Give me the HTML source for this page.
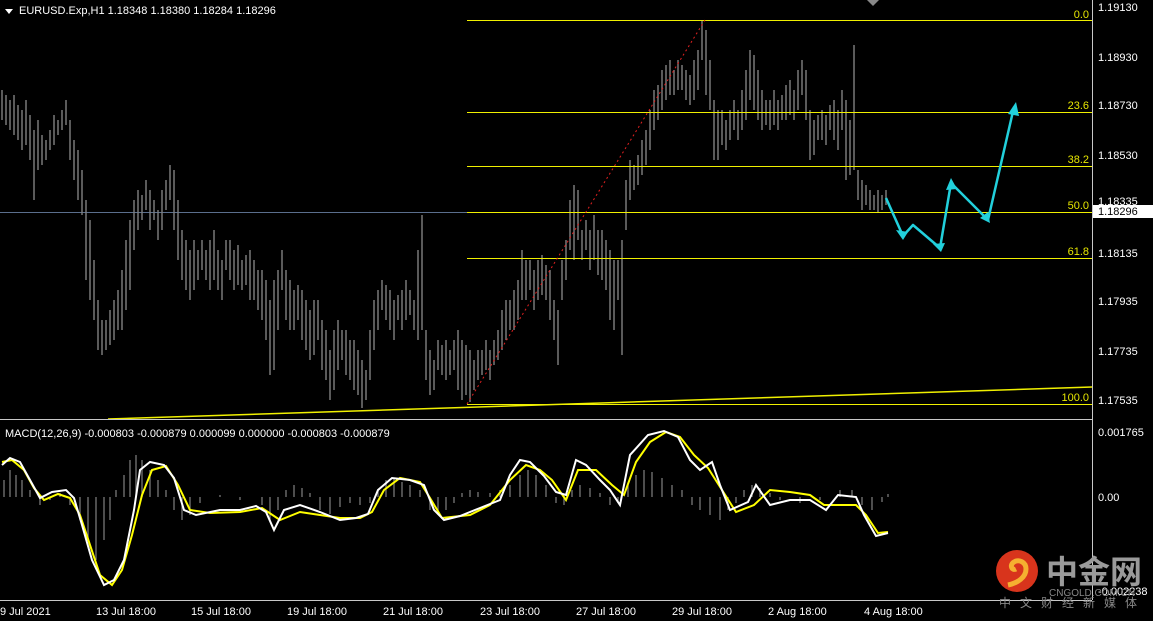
<!DOCTYPE html><html><head><style>
body{margin:0;background:#000;width:1153px;height:621px;overflow:hidden;font-family:"Liberation Sans",sans-serif}
svg{position:absolute;left:0;top:0}
</style></head><body>
<svg width="1153" height="621" xmlns="http://www.w3.org/2000/svg" font-family="Liberation Sans, Noto Sans CJK SC, sans-serif" font-size="11">
<rect width="1153" height="621" fill="#000"/>
<line x1="0" y1="212.5" x2="1092" y2="212.5" stroke="#5a6e8c" stroke-width="1"/>
<path stroke="#808080" stroke-width="1.4" fill="none" d="M2 90V120M6 95V125M10 100V130M14 95V135M18 105V140M22 110V150M26 100V145M30 115V160M34 130V200M38 120V170M42 135V165M46 140V160M50 130V150M54 115V145M58 120V135M62 110V130M66 100V125M70 120V160M74 140V180M78 150V200M82 170V215M86 200V280M90 220V300M94 260V320M98 300V350M102 320V355M106 320V350M110 310V345M114 300V340M118 290V330M122 270V330M126 240V310M130 220V290M134 200V250M138 190V230M142 195V220M146 180V210M150 190V230M154 200V220M158 210V240M162 190V230M166 180V210M170 165V200M174 170V230M178 200V260M182 230V280M186 240V290M190 250V300M194 240V290M198 250V280M202 240V270M206 250V280M210 240V290M214 230V280M218 250V290M222 260V300M226 240V270M230 240V280M234 250V290M238 245V285M242 260V290M246 255V285M250 250V300M254 260V300M258 270V310M262 270V320M266 280V340M270 300V375M274 280V370M278 270V330M282 250V290M286 270V320M290 280V330M294 290V330M298 285V320M302 290V340M306 300V350M310 310V360M314 300V355M318 300V340M322 320V370M326 330V380M330 350V400M334 330V390M338 320V370M342 330V360M346 330V375M350 340V380M354 340V390M358 350V395M362 360V408M366 370V400M370 330V380M374 300V350M378 290V330M382 280V310M386 285V320M390 290V330M394 300V340M398 295V320M402 290V330M406 280V320M410 290V315M414 300V330M418 250V340M422 215V330M426 330V380M430 350V395M434 360V390M438 340V370M442 345V375M446 340V380M450 350V375M454 340V370M458 330V390M462 340V400M466 345V395M470 350V402M474 360V390M478 350V380M482 350V375M486 340V370M490 350V380M494 340V365M498 330V360M502 310V350M506 300V340M510 300V330M514 290V330M518 280V320M522 250V300M526 260V300M530 260V290M534 270V310M538 260V300M542 255V295M546 265V300M550 270V320M554 300V340M558 310V365M562 260V300M566 240V280M570 200V250M574 185V260M578 190V240M582 230V260M586 220V250M590 230V270M594 215V260M598 230V275M602 230V280M606 240V290M610 250V320M614 260V330M618 260V300M622 240V355M626 180V230M630 160V200M634 165V190M638 155V185M642 140V175M646 130V165M650 110V150M654 90V130M658 85V120M662 70V110M666 65V100M670 60V95M674 70V95M678 60V90M682 65V90M686 70V100M690 75V105M694 60V100M698 50V90M702 20V60M706 30V95M710 60V110M714 100V160M718 110V160M722 110V145M726 120V150M730 110V140M734 100V130M738 110V140M742 90V130M746 70V120M750 50V100M754 55V110M758 70V120M762 90V130M766 100V125M770 100V130M774 90V125M778 100V130M782 95V120M786 85V120M790 80V115M794 90V120M798 70V110M802 60V95M806 70V120M810 110V160M814 120V155M818 115V140M822 110V140M826 115V145M830 105V130M834 100V140M838 110V150M842 90V130M846 100V180M850 120V175M854 45V170M858 170V200M862 180V210M866 185V205M870 190V210M874 195V210M878 190V212M882 195V210M886 190V205"/>
<g stroke="#f0f000" stroke-width="1">
<line x1="467" y1="20.5" x2="1092" y2="20.5"/><line x1="467" y1="112.5" x2="1092" y2="112.5"/>
<line x1="467" y1="166.5" x2="1092" y2="166.5"/><line x1="467" y1="212.5" x2="1092" y2="212.5"/>
<line x1="467" y1="258.5" x2="1092" y2="258.5"/><line x1="467" y1="404.5" x2="1092" y2="404.5"/>
<line x1="108" y1="419" x2="1092" y2="387" stroke-width="1.5"/>
</g>
<line x1="467" y1="404" x2="705" y2="20" stroke="#e02020" stroke-dasharray="2,3"/>
<g fill="#e6e600" font-size="11" text-anchor="end">
<text x="1089" y="18">0.0</text><text x="1089" y="109">23.6</text><text x="1089" y="163">38.2</text>
<text x="1089" y="209">50.0</text><text x="1089" y="255">61.8</text><text x="1089" y="401">100.0</text>
</g>
<g stroke="#22d0dc" stroke-width="2.5" fill="none" stroke-linejoin="round">
<polyline points="886,198 903,236 913,225 940,248 951,183 988,220 1014,107"/>
</g>
<g fill="#22d0dc"><polygon points="1016,102 1008,114 1019,116"/><polygon points="903,240 896,230 908,232"/><polygon points="941,252 933,244 945,243"/><polygon points="951,178 946,190 957,189"/><polygon points="990,223 980,218 988,212"/></g>
<line x1="0" y1="419.5" x2="1092" y2="419.5" stroke="#c8c8c8"/>
<line x1="1092.5" y1="0" x2="1092.5" y2="600" stroke="#c8c8c8"/>
<line x1="0" y1="600.5" x2="1092" y2="600.5" stroke="#c8c8c8"/>
<polygon points="867,0 879,0 873,6" fill="#888"/>
<path stroke="#777" stroke-width="1.3" d="M4 480V497M10 470V497M16 475V497M22 480V497M30 490V497M40 497V505M50 497V500M60 493V497M70 497V505M80 497V520M88 497V540M96 497V560M104 497V540M110 497V520M116 490V497M124 475V497M130 460V497M136 455V497M142 460V497M150 470V497M158 480V497M166 490V497M174 497V510M182 497V520M190 497V515M200 497V503M220 495V497M240 497V500M262 497V505M270 497V520M278 497V510M286 490V497M294 485V497M302 488V497M310 493V497M320 497V510M330 497V514M340 497V507M350 497V503M360 497V505M370 497V503M378 490V497M386 480V497M394 478V497M402 482V497M410 485V497M420 490V497M430 497V510M438 497V515M446 497V510M454 497V503M462 493V497M470 490V497M478 492V497M490 493V497M500 490V497M510 485V497M520 475V497M528 470V497M536 475V497M546 485V497M556 497V503M564 497V505M572 490V497M580 485V497M590 488V497M600 493V497M610 497V505M618 497V503M628 485V497M636 475V497M644 470V497M652 472V497M662 478V497M672 485V497M682 490V497M692 497V505M700 497V510M710 497V515M720 497V520M728 497V510M736 497V503M744 490V497M752 485V497M760 488V497M770 493V497M780 497V500M800 497V503M820 497V500M840 490V497M852 490V497M862 497V505M872 497V510M882 497V502M888 494V497"/>
<polyline fill="none" stroke="#ffff00" stroke-width="2" points="2,462 12,460 24,470 34,488 44,500 58,494 70,498 80,515 90,545 100,575 112,585 122,570 132,535 142,495 152,470 166,466 178,485 190,510 210,513 240,512 262,508 280,520 300,512 320,515 340,518 360,518 372,512 384,490 400,478 420,482 430,498 442,518 470,515 490,505 510,480 526,465 540,470 552,480 566,500 578,470 596,470 612,485 624,495 636,462 650,442 666,432 680,437 694,455 708,468 722,490 736,512 754,505 770,490 790,492 810,495 824,505 840,505 856,505 866,515 878,533 888,532"/>
<polyline fill="none" stroke="#ffffff" stroke-width="2" points="2,465 10,458 20,462 30,480 40,498 52,492 66,490 74,498 82,525 92,560 104,585 114,580 124,560 134,510 140,470 150,462 164,465 174,478 184,510 196,515 220,510 240,510 256,506 266,512 274,530 284,510 300,505 320,512 340,520 356,518 368,514 378,490 392,478 410,480 424,485 434,510 444,520 460,516 480,508 500,500 510,475 520,460 530,462 544,476 556,492 566,495 576,460 586,465 600,480 610,490 620,505 630,455 648,435 664,431 678,437 690,460 700,470 712,462 720,485 730,510 748,502 756,485 770,505 790,500 810,500 826,510 838,495 856,497 864,515 876,536 888,533"/>
<g fill="#fff" font-size="11">
<polygon points="5,9 13,9 9,14" fill="#fff"/>
<text x="19" y="14">EURUSD.Exp,H1  1.18348 1.18380 1.18284 1.18296</text>
<text x="5" y="437">MACD(12,26,9) -0.000803 -0.000879 0.000099 0.000000 -0.000803 -0.000879</text>
<text x="1098" y="11">1.19130</text><text x="1098" y="61">1.18930</text><text x="1098" y="109">1.18730</text>
<text x="1098" y="159">1.18530</text><text x="1098" y="205">1.18335</text><text x="1098" y="257">1.18135</text>
<text x="1098" y="305">1.17935</text><text x="1098" y="355">1.17735</text><text x="1098" y="404">1.17535</text>
<text x="1098" y="436">0.001765</text><text x="1098" y="501">0.00</text><text x="1098" y="595">-0.002238</text>
<text x="0" y="615">9 Jul 2021</text><text x="96" y="615">13 Jul 18:00</text><text x="191" y="615">15 Jul 18:00</text>
<text x="287" y="615">19 Jul 18:00</text><text x="383" y="615">21 Jul 18:00</text><text x="480" y="615">23 Jul 18:00</text>
<text x="576" y="615">27 Jul 18:00</text><text x="672" y="615">29 Jul 18:00</text><text x="768" y="615">2 Aug 18:00</text>
<text x="864" y="615">4 Aug 18:00</text>
</g>
<rect x="1093" y="205" width="60" height="13" fill="#fff"/>
<text x="1098" y="215" fill="#000" font-size="11">1.18296</text>
<circle cx="1017" cy="571" r="21" fill="#d8341c"/>
<path d="M1008 585c10-2 18-8 18-16c0-7-7-10-12-7c-5 3-2 9 2 7" stroke="#f5b030" stroke-width="5" fill="none"/>
<text x="1046" y="583" fill="#9a9a9a" font-size="32" font-weight="bold" font-family="Noto Sans CJK SC, sans-serif">中金网</text>
<text x="1049" y="596" fill="#888" font-size="10">CNGOLD.COM.CN</text>
<text x="999" y="607" fill="#888" font-size="12" letter-spacing="9" font-family="Noto Sans CJK SC, sans-serif">中文财经新媒体</text>
</svg>
</body></html>
